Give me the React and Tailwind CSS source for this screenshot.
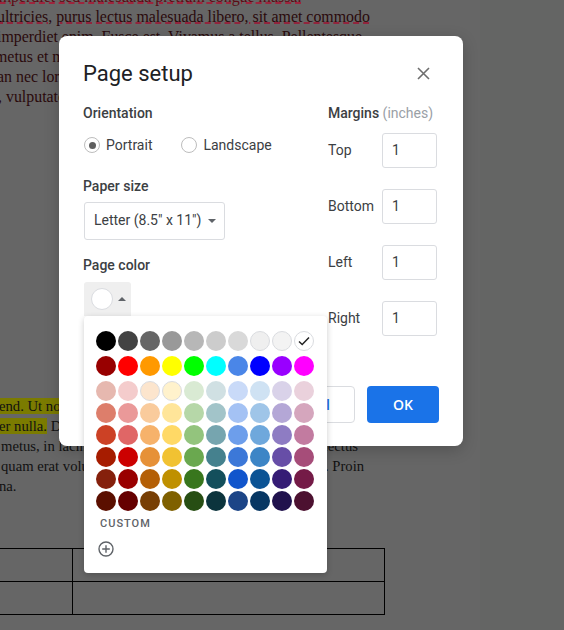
const palette = [
  ["#000000","#434343","#666666","#999999","#b7b7b7","#cccccc","#d9d9d9","#efefef","#f3f3f3","#ffffff"],
  ["#980000","#ff0000","#ff9900","#ffff00","#00ff00","#00ffff","#4a86e8","#0000ff","#9900ff","#ff00ff"],
  ["#e6b8af","#f4cccc","#fce5cd","#fff2cc","#d9ead3","#d0e0e3","#c9daf8","#cfe2f3","#d9d2e9","#ead1dc"],
  ["#dd7e6b","#ea9999","#f9cb9c","#ffe599","#b6d7a8","#a2c4c9","#a4c2f4","#9fc5e8","#b4a7d6","#d5a6bd"],
  ["#cc4125","#e06666","#f6b26b","#ffd966","#93c47d","#76a5af","#6d9eeb","#6fa8dc","#8e7cc3","#c27ba0"],
  ["#a61c00","#cc0000","#e69138","#f1c232","#6aa84f","#45818e","#3c78d8","#3d85c6","#674ea7","#a64d79"],
  ["#85200c","#990000","#b45f06","#bf9000","#38761d","#134f5c","#1155cc","#0b5394","#351c75","#741b47"],
  ["#5b0f00","#660000","#783f04","#7f6000","#274e13","#0c343d","#1c4587","#073763","#20124d","#4c1130"],
];

const font = { fontFamily: "Roboto, sans-serif" };

function Swatch({ color, light, check }) {
  return (
    <div
      className={`w-5 h-5 rounded-full flex items-center justify-center ${light ? "border border-[#dadce0]" : ""}`}
      style={{ backgroundColor: color }}
    >
      {check && (
        <svg width="14" height="14" viewBox="0 0 14 14" fill="none">
          <path d="M2 7.5l3.2 3L12 3.5" stroke="#222" strokeWidth="1.5" />
        </svg>
      )}
    </div>
  );
}

function PaletteRow({ row, className }) {
  return (
    <div className={`flex gap-[2px] ${className || ""}`}>
      {row.map((c, i) => (
        <Swatch
          key={c + i}
          color={c}
          light={["#efefef", "#f3f3f3", "#ffffff", "#fff2cc", "#fce5cd"].includes(c)}
          check={c === "#ffffff"}
        />
      ))}
    </div>
  );
}

function MarginRow({ label }) {
  return (
    <div className="flex items-center h-[35px]">
      <span className="w-[54px] pb-[2px] text-sm text-[#3c4043]">{label}</span>
      <div className="w-[55px] h-[35px] border border-[#dadce0] rounded-[3px] pl-[9px] pb-[2px] flex items-center text-sm text-[#3c4043]">
        1
      </div>
    </div>
  );
}

function Radio({ checked, label, className }) {
  return (
    <div className={`flex items-center ${className || ""}`}>
      <div className="w-4 h-4 rounded-full border border-[#bdbdbd] flex items-center justify-center">
        {checked && <div className="w-[7px] h-[7px] rounded-full bg-[#5f5f5f]" />}
      </div>
      <span className="ml-[6px] text-sm text-[#3c4043]">{label}</span>
    </div>
  );
}

export default function App() {
  return (
    <div className="relative w-[564px] h-[630px] overflow-hidden bg-[#646564] flex">
      {/* Document behind the overlay */}
      <div
        className="w-[480px] h-[630px] bg-[#666666] overflow-hidden text-[#111111]"
        style={{ fontFamily: '"Liberation Serif", serif' }}
      >
        <div className="-mt-[13px] text-[15.9px] leading-[20px] whitespace-nowrap text-[#2a0a0c]">
          <div className="-ml-[30px] text-[#5c0a14] underline decoration-dashed decoration-[#b01030]">elit imperdiet sed malesuada pretium congue massa.</div>
          <div className="-ml-[3px] underline decoration-dashed decoration-[#a01030]">ultricies, purus lectus malesuada libero, sit amet commodo</div>
          <div className="-ml-[3px]">imperdiet enim. Fusce est. Vivamus a tellus. Pellentesque</div>
          <div className="-ml-[5px]">metus et malesuada fames ac turpis egestas.</div>
          <div className="-ml-[3px]">an nec lorem. In porttitor. Donec laoreet.</div>
          <div className="-ml-[2px]">, vulputate vitae, pretium mattis, nunc.</div>
        </div>
        <div className="mt-[289px] text-[14.67px] leading-[20px] whitespace-nowrap">
          <div className="-ml-[1px]"><span className="bg-[#7b7b00]">end. Ut nonummy. Fusce aliquet pede non pede.</span></div>
          <div className="-ml-[1px]"><span className="bg-[#7b7b00]">er nulla.</span> Donec blandit feugiat ligula. Donec hendrerit,</div>
          <div className="ml-[1px]">metus, in lacinia nulla nisl eget sapien. Donec ut est in lectus</div>
          <div className="ml-[1px]">quam erat volutpat. Sed at lorem in nunc porta tristique. Proin</div>
          <div className="-ml-[1px]">na.</div>
        </div>
        <div className="mt-[52px] w-[385px] border-b border-r border-black">
          <div className="flex h-[33px] border-t border-black">
            <div className="w-[73px] border-r border-black" />
          </div>
          <div className="flex h-[33px] border-t border-black">
            <div className="w-[73px] border-r border-black" />
          </div>
        </div>
      </div>

      {/* Page setup dialog */}
      <div
        className="absolute left-[59px] top-[36px] w-[404px] h-[410px] bg-white rounded-lg shadow-[0_4px_16px_rgba(0,0,0,0.2)] pt-[21px] pl-[24px]"
        style={font}
      >
        <div className="flex items-start">
          <h1 className="text-[22px] leading-[34px] text-[#202124]">Page setup</h1>
          <svg className="ml-[224px] mt-[10px]" width="13" height="13" viewBox="0 0 13 13" fill="none">
            <path d="M1 1l11 11M12 1L1 12" stroke="#6e6e6e" strokeWidth="1.6" />
          </svg>
        </div>
        <div className="flex mt-[13px]">
          <div className="w-[245px]">
            <div className="text-sm font-medium leading-[16px] text-[#3c4043] mt-[1px]">Orientation</div>
            <div className="flex mt-[14px] ml-[1px] h-[20px]">
              <Radio checked label="Portrait" />
              <Radio label="Landscape" className="ml-[29px]" />
            </div>
            <div className="text-sm font-medium leading-[16px] text-[#3c4043] mt-[23px]">Paper size</div>
            <div className="mt-[8px] ml-[1px] w-[141px] h-[38px] border border-[#dadce0] rounded-[3px] flex items-center pl-[9px] pb-[2px] text-sm text-[#3c4043] whitespace-nowrap">
              Letter (8.5" x 11")
              <div className="ml-[7px] mt-[1px] border-x-[4px] border-x-transparent border-t-[4px] border-t-[#5f6368]" />
            </div>
            <div className="text-sm font-medium leading-[16px] text-[#3c4043] mt-[17px]">Page color</div>
            <div className="mt-[9px] ml-[1px] w-[47px] h-[34px] bg-[#efefef] rounded-t-[3px] flex items-center pl-[7px]">
              <div className="w-[22px] h-[22px] rounded-full bg-white border border-[#dadce0]" />
              <div className="ml-[5px] border-x-[4px] border-x-transparent border-b-[4px] border-b-[#5f6368]" />
            </div>
          </div>
          <div className="w-[110px]">
            <div className="text-sm font-medium leading-[16px] text-[#3c4043] mt-[1px] whitespace-nowrap">
              Margins <span className="font-normal text-[#9aa0a6]">(inches)</span>
            </div>
            <div className="flex flex-col gap-[21px] mt-[12px]">
              <MarginRow label="Top" />
              <MarginRow label="Bottom" />
              <MarginRow label="Left" />
              <MarginRow label="Right" />
            </div>
          </div>
        </div>
        <div className="absolute left-[200px] top-[350px] flex items-start">
          <div className="w-[96px] h-[37px] border border-[#dadce0] rounded-[4px] pl-[3px] flex items-center justify-center text-sm font-medium text-[#1a73e8]">
            Cancel
          </div>
          <div
            className="ml-[12px] w-[72px] h-[37px] bg-[#1a73e8] rounded-[4px] flex items-center justify-center text-sm font-semibold text-white"
            style={{ fontFamily: '"Open Sans", sans-serif' }}
          >
            OK
          </div>
        </div>
      </div>

      {/* Colour palette menu */}
      <div
        className="absolute left-[84px] top-[316px] w-[243px] h-[257px] bg-white rounded-[4px] shadow-[0_2px_6px_rgba(0,0,0,0.2)] pt-[15px] pl-[12px]"
        style={font}
      >
        <PaletteRow row={palette[0]} />
        <PaletteRow row={palette[1]} className="mt-[5px]" />
        <div className="mt-[5px] flex flex-col gap-[2px]">
          {palette.slice(2).map((row, i) => (
            <PaletteRow key={i} row={row} />
          ))}
        </div>
        <div className="mt-[6px] ml-[4px] text-[11px] leading-[14px] font-medium tracking-[1px] text-[#5f6368]">CUSTOM</div>
        <svg className="mt-[10px] ml-[2px]" width="16" height="16" viewBox="0 0 16 16" fill="none">
          <circle cx="8" cy="8" r="7" stroke="#5f6368" strokeWidth="1.4" />
          <path d="M8 4.2v7.6M4.2 8h7.6" stroke="#5f6368" strokeWidth="1.4" />
        </svg>
      </div>
    </div>
  );
}
